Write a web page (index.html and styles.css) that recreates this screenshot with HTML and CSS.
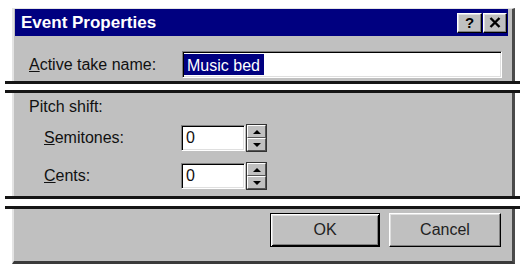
FILE: index.html
```html
<!DOCTYPE html>
<html>
<head>
<meta charset="utf-8">
<link rel="stylesheet" href="styles.css">
</head>
<body>
<div class="page">
  <div class="strip strip-top">
    <div class="titlebar">
      <span class="title">Event Properties</span>
      <span class="tbtn help">?</span>
      <span class="tbtn close"><svg width="12" height="11" viewBox="0 0 12 11"><path d="M1.5 1 L10.5 10 M10.5 1 L1.5 10" stroke="#000" stroke-width="2.4" fill="none"/></svg></span>
    </div>
    <div class="name-row">
      <span class="label"><u>A</u>ctive take name:</span>
      <span class="field name-field"><span class="sel">Music bed</span></span>
    </div>
  </div>
  <div class="sep"></div>
  <div class="strip strip-mid">
    <div class="group-label">Pitch shift:</div>
    <div class="spin-row first">
      <span class="slabel"><u>S</u>emitones:</span>
      <span class="field num-field">0</span>
      <span class="spin"><span class="sbtn"><span class="up"></span></span><span class="sbtn"><span class="down"></span></span></span>
    </div>
    <div class="spin-row">
      <span class="slabel"><u>C</u>ents:</span>
      <span class="field num-field">0</span>
      <span class="spin"><span class="sbtn"><span class="up"></span></span><span class="sbtn"><span class="down"></span></span></span>
    </div>
  </div>
  <div class="sep sep2"></div>
  <div class="strip strip-bot">
    <span class="btn default">OK</span>
    <span class="btn cancel">Cancel</span>
  </div>
</div>
</body>
</html>
```
FILE: styles.css
```css
* { box-sizing: border-box; }
html, body { margin: 0; padding: 0; background: #fff; }
body {
  width: 520px;
  height: 265px;
  overflow: hidden;
  font-family: "Liberation Sans", Arial, sans-serif;
  font-size: 16px;
  color: #111;
}
.page { padding-top: 8px; }
.strip {
  margin-left: 12px;
  width: 503px;
  background: #c0c0c0;
  border-left: 2px solid #e4e4e4;
  border-right: 3px solid #4a4a4a;
}
.strip-top {
  height: 73px;
  border-top: 1px solid #e4e4e4;
  padding: 0 4px 0 1px;
}
.titlebar {
  height: 27px;
  background: #000080;
  color: #fff;
  display: flex;
  align-items: center;
  padding: 0 1px 0 6px;
  font-weight: bold;
  font-size: 17px;
}
.title { flex: 1; }
.tbtn {
  height: 20px;
  background: #c0c0c0;
  border: 1px solid;
  border-color: #fff #000 #000 #fff;
  box-shadow: inset -1px -1px #808080, inset 1px 1px #dfdfdf;
  display: flex;
  align-items: center;
  justify-content: center;
  color: #000;
  font-size: 15px;
  font-weight: bold;
}
.help { width: 25px; margin-right: 1px; }
.close { width: 24px; }
.name-row {
  display: flex;
  margin-top: 15px;
  padding-left: 14px;
}
.label { width: 153px; line-height: 27px; }
.field {
  background: #fff;
  border: 1px solid;
  border-color: #808080 #fff #fff #808080;
  box-shadow: inset 1px 1px #000, inset -1px -1px #dfdfdf;
}
.name-field {
  width: 320px;
  height: 27px;
  padding: 2px 0 2px 1px;
  display: flex;
}
.sel {
  background: #000080;
  color: #fff;
  padding: 0 4px 0 3px;
  line-height: 23px;
}
.sep {
  margin-left: 5px;
  height: 12px;
  border-top: 3px solid #151515;
  border-bottom: 3px solid #151515;
  background: #fff;
}
.sep2 { height: 13px; }
.strip-mid {
  height: 103px;
  padding: 5px 0 0 15px;
}
.group-label { line-height: 18px; }
.spin-row {
  display: flex;
  align-items: center;
  padding-left: 15px;
  margin-top: 12px;
  height: 26px;
}
.spin-row.first { margin-top: 9px; }
.slabel { width: 137px; }
.num-field {
  width: 64px;
  height: 26px;
  padding-left: 4px;
  line-height: 24px;
}
.spin {
  width: 21px;
  height: 28px;
  margin-left: 1px;
  display: flex;
  flex-direction: column;
  border: 1px solid #333;
}
.sbtn {
  flex: 1;
  background: #c0c0c0;
  border: 1px solid;
  border-color: #fff #555 #555 #fff;
  display: flex;
  align-items: center;
  justify-content: center;
}
.up, .down {
  width: 0;
  height: 0;
  border-left: 4px solid transparent;
  border-right: 4px solid transparent;
}
.up { border-bottom: 4px solid #000; }
.down { border-top: 4px solid #000; }
.strip-bot {
  height: 55px;
  border-bottom: 3px solid #3a3a3a;
  display: flex;
  justify-content: flex-end;
  padding: 4px 11px 0 0;
  gap: 9px;
}
.btn {
  height: 34px;
  display: flex;
  align-items: center;
  justify-content: center;
  background: #c0c0c0;
  color: #222;
}
.default {
  width: 110px;
  border: 1px solid #000;
  box-shadow: inset 1px 1px #fff, inset -1px -1px #000, inset 2px 2px #dfdfdf, inset -2px -2px #808080;
}
.cancel {
  width: 112px;
  border: 1px solid;
  border-color: #fff #000 #000 #fff;
  box-shadow: inset -1px -1px #808080, inset 1px 1px #dfdfdf;
}
```
